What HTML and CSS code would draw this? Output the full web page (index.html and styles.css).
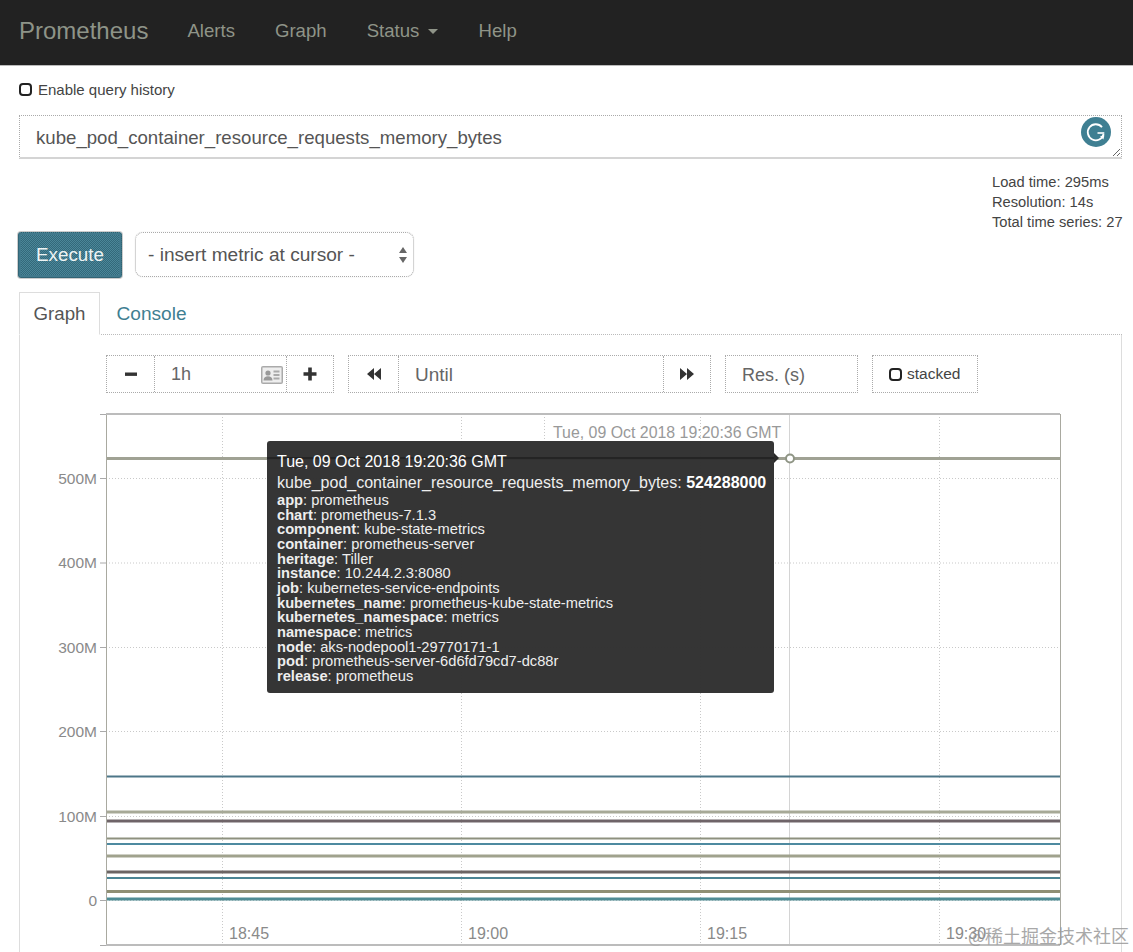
FILE: index.html
```html
<!DOCTYPE html>
<html lang="en">
<head>
<meta charset="utf-8">
<title>Prometheus Time Series Collection and Processing Server</title>
<link rel="stylesheet" href="styles.css">
</head>
<body>
<nav class="navbar">
  <a class="brand">Prometheus</a>
  <a class="nav-link">Alerts</a>
  <a class="nav-link">Graph</a>
  <a class="nav-link">Status <span class="caret"></span></a>
  <a class="nav-link">Help</a>
</nav>
<main class="page">
  <label class="history"><span class="check"></span>Enable query history</label>
  <div class="query">
    <textarea class="expr" spellcheck="false">kube_pod_container_resource_requests_memory_bytes</textarea>
    <svg class="grammarly" width="30" height="30" viewBox="0 0 30 30"><circle cx="15" cy="15" r="15" fill="#3f7f92"/><path d="M21 10.200A8 8 0 1 0 22.600 17" fill="none" stroke="#fff" stroke-width="1.800"/><path d="M16.500 15.200h6.800v1.600h-6.800z" fill="#fff"/><path d="M23.400 18.400l-4.400.8 3.400 3.200z" fill="#fff"/></svg>
  </div>
  <div class="stats">
    <div>Load time: 295ms</div>
    <div>Resolution: 14s</div>
    <div>Total time series: 27</div>
  </div>
  <div class="actions">
    <button class="execute">Execute</button>
    <div class="select">- insert metric at cursor -
      <svg width="10" height="18" viewBox="0 0 10 18"><path d="M5 1l4 6H1z" fill="#666"/><path d="M5 17l4-6H1z" fill="#666"/></svg>
    </div>
  </div>
  <div class="tabs">
    <a class="tab active">Graph</a>
    <a class="tab">Console</a>
  </div>
  <section class="panel">
    <div class="controls">
      <div class="group range">
        <span class="cell btn"><svg width="14" height="14" viewBox="0 0 14 14"><rect x="1" y="5.500" width="12" height="3.400" fill="#333"/></svg></span>
        <span class="cell field grow">1h
          <svg class="cal" width="22" height="18" viewBox="0 0 22 18"><rect width="22" height="18" rx="2" fill="#aaa"/><rect x="1.500" y="1.500" width="19" height="15" fill="#eee"/><circle cx="7" cy="7" r="2.600" fill="#999"/><path d="M2.500 14.500c0-3 2-4.200 4.500-4.200s4.500 1.200 4.500 4.200z" fill="#999"/><path d="M12.500 4.500h6v2h-6zm0 3.500h6v2h-6zm0 3.500h6v2h-6z" fill="#aaa"/></svg>
        </span>
        <span class="cell btn"><svg width="16" height="16" viewBox="0 0 16 16"><path d="M6.200 1.500h3.600v4.700h4.700v3.600H9.800v4.700H6.200V9.800H1.500V6.200h4.700z" fill="#333"/></svg></span>
      </div>
      <div class="group until">
        <span class="cell btn"><svg width="16" height="14" viewBox="0 0 16 14"><path d="M8 1v12L1 7zm7 0v12L8 7z" fill="#333"/></svg></span>
        <span class="cell field grow">Until</span>
        <span class="cell btn"><svg width="16" height="14" viewBox="0 0 16 14"><path d="M1 1v12l7-6zm7 0v12l7-6z" fill="#333"/></svg></span>
      </div>
      <div class="group res"><span class="cell field">Res. (s)</span></div>
      <div class="group stacked"><span class="check small"></span>stacked</div>
    </div>
    <div class="chart">
      <svg class="plot" width="1040" height="552" viewBox="40 400 1040 552">
        <g class="grid">
          <path d="M106 478.500H1060M106 563H1060M106 647.500H1060M106 731.500H1060M106 816.500H1060M106 900.500H1060"/>
          <path d="M222.500 414V945M461.500 414V945M700.500 414V945M939.500 414V945M544.500 414V441"/>
        </g>
        <path class="hover-x" d="M789.500 414V945"/>
        <g class="series">
          <path d="M106 458.500H1060" stroke="#a0a294" stroke-width="3"/>
          <path d="M106 776.500H1060" stroke="#4d7688" stroke-width="2"/>
          <path d="M106 812H1060" stroke="#a7a997" stroke-width="3"/>
          <path d="M106 821H1060" stroke="#6f6468" stroke-width="3"/>
          <path d="M106 838.500H1060" stroke="#8e917f" stroke-width="2"/>
          <path d="M106 844H1060" stroke="#4e8aa0" stroke-width="2"/>
          <path d="M106 856H1060" stroke="#a0a28d" stroke-width="3"/>
          <path d="M106 872H1060" stroke="#6b6564" stroke-width="3"/>
          <path d="M106 878H1060" stroke="#4a8494" stroke-width="2"/>
          <path d="M106 891.500H1060" stroke="#8f8f74" stroke-width="3"/>
          <path d="M106 899H1060" stroke="#4f8c94" stroke-width="3"/>
        </g>
        <path class="axis" d="M106.500 414V945M1060.500 414V945"/>
        <path class="frame" d="M106 414H1060M106 945H1060"/>
        <path class="tick" d="M100 414.500h6M100 478.500h6M100 563h6M100 647.500h6M100 731.500h6M100 816.500h6M100 900.500h6M100 945.500h6"/>
        <g class="labels">
          <text x="97" y="484" text-anchor="end">500M</text>
          <text x="97" y="568" text-anchor="end">400M</text>
          <text x="97" y="653" text-anchor="end">300M</text>
          <text x="97" y="737" text-anchor="end">200M</text>
          <text x="97" y="822" text-anchor="end">100M</text>
          <text x="97" y="906" text-anchor="end">0</text>
          <text class="x-label" x="229" y="939">18:45</text>
          <text class="x-label" x="468" y="939">19:00</text>
          <text class="x-label" x="707" y="939">19:15</text>
          <text class="x-label" x="946" y="939">19:30</text>
          <text class="x-detail" x="553" y="438">Tue, 09 Oct 2018 19:20:36 GMT</text>
        </g>
        <circle cx="790" cy="458.500" r="4" fill="#fff" stroke="#8f9585" stroke-width="2"/>
      </svg>
      <div class="tooltip">
        <div class="t-date">Tue, 09 Oct 2018 19:20:36 GMT</div>
        <div class="t-value">kube_pod_container_resource_requests_memory_bytes: <b>524288000</b></div>
        <div class="t-labels">
          <div><b>app</b>: prometheus</div>
          <div><b>chart</b>: prometheus-7.1.3</div>
          <div><b>component</b>: kube-state-metrics</div>
          <div><b>container</b>: prometheus-server</div>
          <div><b>heritage</b>: Tiller</div>
          <div><b>instance</b>: 10.244.2.3:8080</div>
          <div><b>job</b>: kubernetes-service-endpoints</div>
          <div><b>kubernetes_name</b>: prometheus-kube-state-metrics</div>
          <div><b>kubernetes_namespace</b>: metrics</div>
          <div><b>namespace</b>: metrics</div>
          <div><b>node</b>: aks-nodepool1-29770171-1</div>
          <div><b>pod</b>: prometheus-server-6d6fd79cd7-dc88r</div>
          <div><b>release</b>: prometheus</div>
        </div>
      </div>
    </div>
  </section>
</main>
<div class="watermark">@稀土掘金技术社区</div>
</body>
</html>
```
FILE: styles.css
```css
* { box-sizing: border-box; }
html, body { margin: 0; height: 952px; overflow: hidden; }
body { font-family: "Liberation Sans", Arial, sans-serif; color: #333; background: #fff; position: relative; }

.navbar { display: flex; align-items: center; height: 66px; padding: 0 0 4px 19px; background: #222; border-bottom: 1px solid #bbb; }
.brand { font-size: 24px; color: #8e9488; margin-right: 39px; }
.nav-link { font-size: 18.600px; color: #8f9488; margin-right: 40px; }
.nav-link:nth-child(4) { margin-right: 41px; }
.caret { display: inline-block; width: 0; height: 0; margin-left: 3px; vertical-align: middle; border-top: 5px solid #8f9488; border-left: 5px solid transparent; border-right: 5px solid transparent; }

.page { padding: 0 11px 0 19px; }
.history { display: flex; align-items: center; height: 20px; margin-top: 13px; font-size: 15px; color: #444; }
.check { display: inline-block; width: 13px; height: 13px; margin-right: 6px; border: 2px solid #222; border-radius: 4px; }
.query { position: relative; margin-top: 16px; height: 44px; }
.expr { display: block; width: 100%; height: 44px; padding: 9px 16px; font: 18.640px/26px "Liberation Sans", Arial, sans-serif; color: #555; border: 1px dotted #aaa; border-bottom: 2px solid #d4d4d4; outline: none; overflow: hidden; }
.grammarly { position: absolute; right: 11px; top: 2px; }

.stats { margin-top: 13px; padding-left: 973px; font-size: 14.700px; line-height: 20px; color: #444; white-space: nowrap; }
.actions { display: flex; gap: 13px; margin-left: -1px; }
.execute { width: 104px; height: 46px; padding: 0; font: 18.800px "Liberation Sans", Arial, sans-serif; color: #eef4f4; background: repeating-conic-gradient(#33687a 0 25%, #4b8799 0 50%) 0 0 / 2px 2px; border: 1px dotted #2d5c6b; border-radius: 3px; box-shadow: 0 0 0 1px #ccc, inset 0 0 0 2px #41798c; }
.select { display: flex; align-items: center; justify-content: space-between; width: 279px; height: 45px; padding: 0 5px 0 12px; font-size: 19.100px; color: #555; border: 1px dotted #aaa; border-radius: 8px; box-shadow: 0 0 1px #ccc; }

.tabs { display: flex; margin-top: 14px; height: 43px; border-bottom: 1px dotted #bbb; }
.tab { display: flex; align-items: center; justify-content: center; height: 43px; width: 81px; font-size: 18.700px; color: #3f7f92; }
.tab.active { color: #555; background: #fff; border: 1px solid #ddd; border-bottom-color: #fff; }
.tab + .tab { width: 103px; font-size: 19.100px; }

.panel { border-left: 1px solid #ddd; border-right: 1px solid #ddd; padding: 20px 0 0 86px; height: 620px; position: relative; }
.controls { display: flex; gap: 14px; height: 38px; font-size: 18px; color: #666; }
.group { display: flex; height: 38px; border: 1px dotted #aaa; }
.cell { display: flex; align-items: center; height: 100%; }
.cell + .cell { border-left: 1px dotted #aaa; }
.btn { justify-content: center; width: 47px; }
.until .btn:first-child { width: 49px; }
.until .field { font-size: 19px; padding-top: 2px; }
.field { padding: 1px 16px 0; }
.res .field { padding-top: 2px; }
.grow { flex: 1; }
.range { width: 228px; }
.until { width: 363px; }
.res { width: 133px; }
.stacked { width: 106px; align-items: center; padding-left: 16px; font-size: 15.500px; color: #444; }
.check.small { margin-right: 5px; }
.cal { margin-left: auto; margin-right: -13px; }

.chart { position: absolute; left: 20px; top: 65px; width: 1040px; height: 552px; }
.plot { display: block; }
.grid path { fill: none; stroke: #c9c9c9; stroke-width: 1; stroke-dasharray: 1 2; }
.hover-x { fill: none; stroke: #d4d4d4; stroke-width: 1; }
.axis { fill: none; stroke: #a9a9a0; stroke-width: 1; }
.frame { fill: none; stroke: #bcbcbc; stroke-width: 2; }
.tick { fill: none; stroke: #aaa; stroke-width: 1; }
.labels text { font: 15.500px "Liberation Sans", Arial, sans-serif; fill: #8a8a8a; }
.labels .x-label { font-size: 16px; }
.labels .x-detail { font-size: 15.900px; fill: #999; }

.tooltip { position: absolute; left: 227px; top: 41px; width: 507px; height: 252px; padding: 12px 0 0 10px; background: rgba(46, 46, 46, .97); border-radius: 3px; color: #eee; font-size: 16px; white-space: nowrap; }
.tooltip::before { content: ""; position: absolute; left: 0; right: 0; top: 16px; height: 2px; background: #242424; }
.tooltip::after { content: ""; position: absolute; right: -5px; top: 12px; border-left: 5px solid #2a2a2a; border-top: 5px solid transparent; border-bottom: 5px solid transparent; }
.t-date { position: relative; line-height: 18px; color: #fff; }
.t-value { margin-top: 3px; line-height: 18px; }
.t-value b { color: #fff; }
.t-labels { margin-top: 1px; font-size: 14.680px; line-height: 14.670px; }
.t-labels b { color: #eee; }

.watermark { position: absolute; left: 968px; top: 924px; font: 18px/22px "Noto Sans CJK SC", sans-serif; color: #9a9a9a; white-space: nowrap; opacity: .85; }
```
